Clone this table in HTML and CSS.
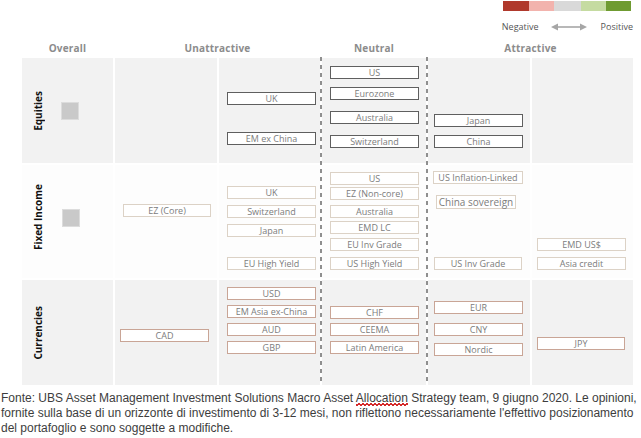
FILE: index.html
```html
<!DOCTYPE html>
<html lang="it">
<head>
<meta charset="utf-8">
<link rel="stylesheet" href="styles.css">
</head>
<body>
<div class="legend">
  <div class="legend-bar">
    <span class="sw sw-neg2"></span><span class="sw sw-neg1"></span><span class="sw sw-neu"></span><span class="sw sw-pos1"></span><span class="sw sw-pos2"></span>
  </div>
  <div class="legend-text">
    <span>Negative</span>
    <svg class="arrow" width="36" height="8" viewBox="0 0 36 8"><path d="M5 4H31" stroke="#a6a6a6" stroke-width="1.6"/><path d="M0 4L7 0.5V7.5Z M36 4L29 0.5V7.5Z" fill="#a6a6a6"/></svg>
    <span>Positive</span>
  </div>
</div>

<div class="chart">
  <div class="head c1">Overall</div>
  <div class="head c23">Unattractive</div>
  <div class="head c4">Neutral</div>
  <div class="head c56">Attractive</div>

  <!-- Equities -->
  <div class="cell overall gray"><span class="rowlabel">Equities</span><span class="square"></span></div>
  <div class="cell gray"></div>
  <div class="cell gray pl8">
    <div class="box eq mt34">UK</div>
    <div class="box eq mt27">EM ex China</div>
  </div>
  <div class="cell gray pl8">
    <div class="box eq mt8">US</div>
    <div class="box eq mt8">Eurozone</div>
    <div class="box eq mt11">Australia</div>
    <div class="box eq mt11">Switzerland</div>
  </div>
  <div class="cell gray pl6">
    <div class="box eq mt56">Japan</div>
    <div class="box eq mt8">China</div>
  </div>
  <div class="cell gray"></div>

  <!-- Fixed Income -->
  <div class="cell overall light fi-overall"><span class="rowlabel">Fixed Income</span><span class="square sq-fi"></span></div>
  <div class="cell light pl8">
    <div class="box fi mt39 w88">EZ (Core)</div>
  </div>
  <div class="cell light pl8">
    <div class="box fi mt21">UK</div>
    <div class="box fi mt6">Switzerland</div>
    <div class="box fi mt6">Japan</div>
    <div class="box fi mt20">EU High Yield</div>
  </div>
  <div class="cell light pl8">
    <div class="box fi mt7">US</div>
    <div class="box fi mt2">EZ (Non-core)</div>
    <div class="box fi mt5">Australia</div>
    <div class="box fi mt3">EMD LC</div>
    <div class="box fi mt4">EU Inv Grade</div>
    <div class="box fi mt6">US High Yield</div>
  </div>
  <div class="cell light pl5">
    <div class="box fi mt6 w90">US Inflation-Linked</div>
    <div class="box fi mt11 sov">China sovereign</div>
    <div class="box fi mt48 ml1 w88">US Inv Grade</div>
  </div>
  <div class="cell light pl5">
    <div class="box fi mt73">EMD US$</div>
    <div class="box fi mt6">Asia credit</div>
  </div>

  <!-- Currencies -->
  <div class="cell overall gray"><span class="rowlabel">Currencies</span></div>
  <div class="cell gray pl5">
    <div class="box cu mt49">CAD</div>
  </div>
  <div class="cell gray pl8">
    <div class="box cu mt7">USD</div>
    <div class="box cu mt5">EM Asia ex-China</div>
    <div class="box cu mt5">AUD</div>
    <div class="box cu mt5">GBP</div>
  </div>
  <div class="cell gray pl8">
    <div class="box cu mt26">CHF</div>
    <div class="box cu mt4">CEEMA</div>
    <div class="box cu mt5">Latin America</div>
  </div>
  <div class="cell gray pl6">
    <div class="box cu mt21">EUR</div>
    <div class="box cu mt9">CNY</div>
    <div class="box cu mt7">Nordic</div>
  </div>
  <div class="cell gray pl5">
    <div class="box cu mt57 w88">JPY</div>
  </div>

  <span class="divider div-left"></span>
  <span class="divider div-right"></span>
</div>

<p class="source">Fonte: UBS Asset Management Investment Solutions Macro Asset <span class="spell">Allocation</span> Strategy team, 9 giugno 2020. Le opinioni,<br>fornite sulla base di un orizzonte di investimento di 3-12 mesi, non riflettono necessariamente l'effettivo posizionamento<br>del portafoglio e sono soggette a modifiche.</p>
</body>
</html>
```

FILE: styles.css
```css
* { box-sizing: border-box; }

body {
  margin: 0;
  width: 641px;
  height: 438px;
  background: #ffffff;
  font-family: "Open Sans", "Noto Sans", sans-serif;
  overflow: hidden;
}

/* Legend */
.legend {
  height: 40px;
  padding: 1px 8px 0 0;
  display: flex;
  flex-direction: column;
  align-items: flex-end;
}
.legend-bar {
  display: flex;
  height: 10px;
  margin-right: 2px;
}
.sw { display: block; height: 10px; }
.sw-neg2 { width: 26px; background: #b0392c; }
.sw-neg1 { width: 25px; background: #f2b3ad; }
.sw-neu  { width: 27px; background: #d9d9d9; }
.sw-pos1 { width: 25px; background: #c5dba1; }
.sw-pos2 { width: 25px; background: #6f9b31; }

.legend-text {
  margin-top: 10px;
  display: flex;
  align-items: center;
  font-size: 9px;
  line-height: 11px;
  color: #555555;
}
.arrow { margin: 0 14px 0 12px; }

/* Chart */
.chart {
  position: relative;
  margin-left: 22px;
  display: grid;
  grid-template-columns: 91px 102px 101px 104px 102px 101px;
  grid-template-rows: 16px 105px 113px 105px;
  column-gap: 2px;
  row-gap: 2px;
  width: 611px;
}

.head {
  font-size: 10px;
  font-weight: 700;
  color: #8c8c8c;
  text-align: center;
  line-height: 16px;
  letter-spacing: 0.2px;
}
.c1 { grid-column: 1; }
.c23 { grid-column: 2 / span 2; }
.c4 { grid-column: 4; }
.c56 { grid-column: 5 / span 2; }

.cell {
  display: flex;
  flex-direction: column;
  align-items: flex-start;
}
.gray { background: #f2f2f2; }
.light { background: #fdfdfd; }

.overall {
  flex-direction: row;
  align-items: center;
  padding-left: 11px;
}
.fi-overall { padding-bottom: 8px; }

.rowlabel {
  writing-mode: vertical-rl;
  transform: rotate(180deg);
  font-size: 10px;
  font-weight: 700;
  color: #111111;
  width: 10px;
  line-height: 10px;
  white-space: nowrap;
}
.square {
  width: 18px;
  height: 18px;
  margin-left: 18px;
  background: #c9c9c9;
  border: 1px solid #dcdcdc;
}
.sq-fi { margin-left: 19px; }

.pl5 { padding-left: 5px; }
.pl6 { padding-left: 6px; }
.pl8 { padding-left: 8px; }

.box {
  width: 89px;
  height: 13px;
  background: #ffffff;
  border: 1px solid #666666;
  font-size: 9px;
  line-height: 11px;
  text-align: center;
  color: #7c7c7c;
  white-space: nowrap;
}
.box.eq { border-color: #5f5f5f; }
.box.fi { border-color: #dcd2c6; }
.box.cu { border-color: #c9a596; }

.w88 { width: 88px; }
.w90 { width: 90px; }
.ml1 { margin-left: 1px; }
.sov {
  width: 80px;
  height: 14px;
  margin-left: 3px;
  font-size: 10px;
  line-height: 12px;
}

.mt2 { margin-top: 2px; }
.mt3 { margin-top: 3px; }
.mt4 { margin-top: 4px; }
.mt5 { margin-top: 5px; }
.mt6 { margin-top: 6px; }
.mt7 { margin-top: 7px; }
.mt8 { margin-top: 8px; }
.mt9 { margin-top: 9px; }
.mt11 { margin-top: 11px; }
.mt20 { margin-top: 20px; }
.mt21 { margin-top: 21px; }
.mt26 { margin-top: 26px; }
.mt27 { margin-top: 27px; }
.mt34 { margin-top: 34px; }
.mt39 { margin-top: 39px; }
.mt48 { margin-top: 48px; }
.mt49 { margin-top: 49px; }
.mt56 { margin-top: 56px; }
.mt57 { margin-top: 57px; }
.mt73 { margin-top: 73px; }

.divider {
  position: absolute;
  top: 17px;
  bottom: 0;
  width: 2px;
  background: repeating-linear-gradient(to bottom, #8f8f8f 0 4px, transparent 4px 8px);
}
.div-left { left: 298px; }
.div-right { left: 404px; }

/* Source note */
.source {
  margin: 6px 0 0 1px;
  font-family: "Liberation Sans", Arial, sans-serif;
  font-size: 12px;
  line-height: 15px;
  color: #3d3d3d;
  white-space: nowrap;
}
.spell {
  position: relative;
}
.spell::after {
  content: "";
  position: absolute;
  left: 0;
  right: 0;
  bottom: -1px;
  height: 3px;
  background:
    linear-gradient(135deg, transparent 35%, #d42a2a 35%, #d42a2a 65%, transparent 65%) 0 0 / 4px 3px repeat-x,
    linear-gradient(45deg, transparent 35%, #d42a2a 35%, #d42a2a 65%, transparent 65%) 2px 0 / 4px 3px repeat-x;
}
```
